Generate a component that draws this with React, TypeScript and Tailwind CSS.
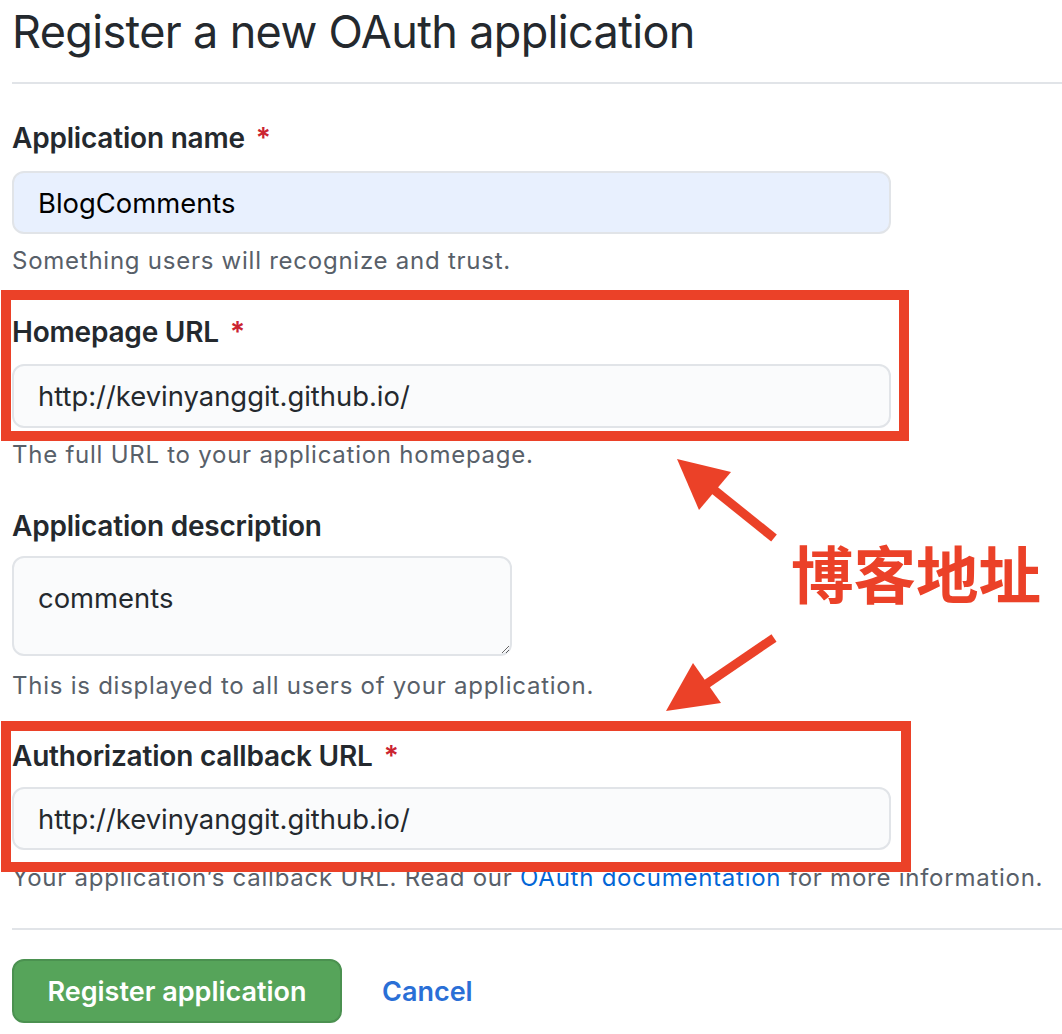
import React from "react";

const Label = ({ text, required }: { text: string; required?: boolean }) => (
  <div className="text-[28px] leading-[36px] font-semibold tracking-[-0.2px] text-[#24292e]">
    {text}
    {required && <span className="ml-[11px] text-[#cb2431]">*</span>}
  </div>
);

const Help = ({ children }: { children: React.ReactNode }) => (
  <div className="text-[24px] leading-[32px] tracking-[0.75px] text-[#586069]">
    {children}
  </div>
);

const inputClass =
  "block w-[879px] rounded-[12px] border-2 border-[#e1e4e8] px-[24px] text-[27.4px] text-[#24292e] outline-none";

export default function App() {
  return (
    <div
      className="relative w-[1062px] h-[1034px] overflow-hidden bg-white pl-[12px]"
      style={{ fontFamily: "Inter, 'Noto Sans', sans-serif" }}
    >
      <h1 className="pt-[4px] text-[45px] leading-[56px] font-normal tracking-[-0.65px] text-[#24292e]">
        Register a new OAuth application
      </h1>
      <div className="mt-[22px] h-[2px] bg-[#e1e4e8]" />

      <form className="flex flex-col">
        <div className="mt-[36px]">
          <Label text="Application name" required />
        </div>
        <input
          readOnly
          value="BlogComments"
          className={`${inputClass} mt-[15px] h-[63px] bg-[#e8f0fe] text-black`}
        />
        <div className="mt-[11px]">
          <Help>Something users will recognize and trust.</Help>
        </div>

        <div className="mt-[37px]">
          <Label text="Homepage URL" required />
        </div>
        <input
          readOnly
          value="http://kevinyanggit.github.io/"
          className={`${inputClass} mt-[14px] h-[64px] bg-[#fafbfc]`}
        />
        <div className="mt-[11px]">
          <Help>The full URL to your application homepage.</Help>
        </div>

        <div className="mt-[37px]">
          <Label text="Application description" />
        </div>
        <textarea
          readOnly
          value="comments"
          className="mt-[12px] block h-[100px] w-[500px] rounded-[12px] border-2 border-[#e1e4e8] bg-[#fafbfc] px-[24px] pt-[22px] text-[27.4px] leading-[36px] text-[#24292e] outline-none"
        />
        <div className="mt-[14px]">
          <Help>This is displayed to all users of your application.</Help>
        </div>

        <div className="mt-[36px]">
          <Label text="Authorization callback URL" required />
        </div>
        <input
          readOnly
          value="http://kevinyanggit.github.io/"
          className={`${inputClass} mt-[13px] h-[63px] bg-[#fafbfc]`}
        />
        <div className="mt-[12px]">
          <Help>
            Your application’s callback URL. Read our{" "}
            <a className="text-[#0366d6]">OAuth documentation</a> for more
            information.
          </Help>
        </div>

        <div className="mt-[34px] h-[2px] bg-[#e1e4e8]" />

        <div className="mt-[29px] flex items-center">
          <button
            type="button"
            className="h-[64px] w-[330px] rounded-[12px] border-2 border-[#4b9150] bg-[#56a45a] pt-[2px] text-[27px] font-semibold text-white"
          >
            Register application
          </button>
          <a className="ml-[40px] pt-[2px] text-[27px] font-semibold text-[#2a6fd6]">
            Cancel
          </a>
        </div>
      </form>

      {/* annotations */}
      <div className="absolute left-[1px] top-[290px] h-[151px] w-[908px] border-[10px] border-[#eb4128]" />
      <div className="absolute left-[1px] top-[721px] h-[151px] w-[910px] border-[10px] border-[#eb4128]" />

      <svg
        className="absolute left-0 top-0"
        width="1062"
        height="1034"
        viewBox="0 0 1062 1034"
      >
        <line x1="713" y1="489" x2="774" y2="538" stroke="#eb4128" strokeWidth="9" />
        <polygon points="677,459 731,472 699,510" fill="#eb4128" />
        <line x1="705" y1="685" x2="774" y2="638" stroke="#eb4128" strokeWidth="9" />
        <polygon points="666,711 693,663 721,703" fill="#eb4128" />
      </svg>

      <div
        className="absolute left-[791px] top-[540px] text-[62.5px] leading-[63px] font-bold text-[#eb4128]"
        style={{ fontFamily: "'Noto Sans CJK SC', sans-serif" }}
      >
        博客地址
      </div>
    </div>
  );
}
